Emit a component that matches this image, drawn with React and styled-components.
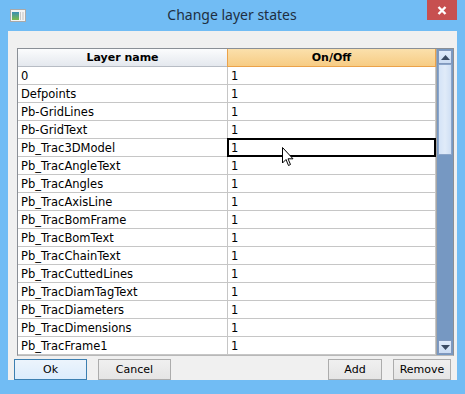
import React from 'react';
import styled, { createGlobalStyle } from 'styled-components';

const GlobalStyle = createGlobalStyle`
	html, body {
		margin: 0;
		padding: 0;
		background: #71bcf4;
	}
`;

const layers = [
	'0',
	'Defpoints',
	'Pb-GridLines',
	'Pb-GridText',
	'Pb_Trac3DModel',
	'Pb_TracAngleText',
	'Pb_TracAngles',
	'Pb_TracAxisLine',
	'Pb_TracBomFrame',
	'Pb_TracBomText',
	'Pb_TracChainText',
	'Pb_TracCuttedLines',
	'Pb_TracDiamTagText',
	'Pb_TracDiameters',
	'Pb_TracDimensions',
	'Pb_TracFrame1',
];

const SELECTED = 4;

const Window = styled.div`
	position: relative;
	width: 465px;
	height: 394px;
	background: #71bcf4;
	display: flex;
	flex-direction: column;
	box-sizing: border-box;
	overflow: hidden;
	font-family: 'DejaVu Sans', Verdana, sans-serif;
`;

const TitleBar = styled.div`
	height: 31px;
	display: flex;
	align-items: flex-start;
	padding: 0 8px 0 10px;
	flex-shrink: 0;
`;

const AppIcon = styled.div`
	margin-top: 9px;
	width: 16px;
	height: 13px;
	display: flex;
`;

const Title = styled.div`
	flex: 1;
	text-align: center;
	margin-top: 5px;
	font-family: 'Noto Sans', 'Open Sans', sans-serif;
	font-size: 14px;
	color: #1e2f42;
	padding-left: 11px;
`;

const CloseButton = styled.div`
	width: 30px;
	height: 20px;
	background: #c75050;
	display: flex;
	align-items: center;
	justify-content: center;
`;

const Client = styled.div`
	margin: 0 8px;
	height: 349px;
	background: #f0f0f0;
	display: flex;
	flex-direction: column;
	padding: 17px 3px 0 9px;
	box-sizing: border-box;
`;

const Table = styled.div`
	height: 308px;
	border: 1px solid #8a8f96;
	border-bottom-color: #b8b8b8;
	background: #fff;
	display: grid;
	grid-template-columns: 1fr 17px;
	overflow: hidden;
	box-sizing: border-box;
`;

const Grid = styled.div`
	display: grid;
	grid-template-columns: 210px 1fr;
	grid-auto-rows: 18px;
	overflow: hidden;
`;

const HeaderCell = styled.div`
	box-sizing: border-box;
	display: flex;
	align-items: center;
	justify-content: center;
	font-weight: bold;
	font-size: 11px;
	color: #000;
	background: ${({ $active }) =>
		$active
			? 'linear-gradient(#fbe0ac, #f7cc84)'
			: 'linear-gradient(#fbfcfd, #e4e8ee)'};
	border-right: 1px solid ${({ $active }) => ($active ? '#eba24a' : '#c2c6cc')};
	border-bottom: 1px solid ${({ $active }) => ($active ? '#eba24a' : '#b7bcc4')};
	${({ $active }) => $active && 'border-left: 1px solid #eba24a; margin-left: -1px;'}
`;

const Cell = styled.div`
	box-sizing: border-box;
	display: flex;
	align-items: center;
	padding-left: 3px;
	font-size: 11.5px;
	color: #000;
	white-space: nowrap;
	border-bottom: 1px solid #c6c6c6;
	border-right: 1px solid #c6c6c6;
	${({ $selected }) =>
		$selected &&
		`
		border: 2px solid #000;
		margin: -1px 0 0 -1px;
		height: 19px;
		padding-left: 2px;
	`}
`;

const ScrollBar = styled.div`
	display: flex;
	flex-direction: column;
	background: #7698c2;
	border-left: 1px solid #a7a7a7;
	padding: 1px 0 1px 0;
	box-sizing: border-box;
`;

const ArrowButton = styled.div`
	height: 14px;
	margin: 0 1px;
	background: linear-gradient(#dfeafa, #cbdcf3);
	border: 1px solid #8198bd;
	box-sizing: border-box;
	display: flex;
	align-items: center;
	justify-content: center;
`;

const Thumb = styled.div`
	height: 91px;
	margin: 0 1px;
	background: linear-gradient(90deg, #d4e3f7, #e0ebf9 50%, #cfdff4);
	border: 1px solid #8ba5c9;
	box-sizing: border-box;
`;

const Track = styled.div`
	flex: 1;
`;

const ButtonRow = styled.div`
	display: flex;
	align-items: center;
	margin: 3px 3px 0 -3px;
	gap: 11px;
`;

const Spacer = styled.div`
	flex: 1;
`;

const Button = styled.button`
	height: 21px;
	width: ${({ $w }) => $w}px;
	margin: 0;
	padding: 0;
	font-family: 'DejaVu Sans', Verdana, sans-serif;
	font-size: 11px;
	color: #000;
	background: ${({ $default }) =>
		$default ? 'linear-gradient(#ecf4fc, #dcecfc)' : 'linear-gradient(#f0f0f0, #e5e5e5)'};
	border: 1px solid ${({ $default }) => ($default ? '#3c7fb1' : '#acacac')};
	box-sizing: border-box;
`;

const Cursor = styled.svg`
	position: absolute;
	left: 282px;
	top: 147px;
`;

const WindowIcon = () => (
	<svg width="16" height="13" viewBox="0 0 16 13">
		<rect x="0.5" y="0.5" width="15" height="12" fill="#f4f4f4" stroke="#a9a9a9" />
		<defs>
			<linearGradient id="ig" x1="0" y1="0" x2="0" y2="1">
				<stop offset="0" stopColor="#3b8fb5" />
				<stop offset="1" stopColor="#7dbb4a" />
			</linearGradient>
		</defs>
		<rect x="2" y="3" width="7" height="8" fill="url(#ig)" />
		<rect x="10" y="3" width="1" height="8" fill="#c8c8c8" />
		<rect x="12" y="3" width="2" height="8" fill="#dadada" />
	</svg>
);

const App = () => {
	return (
		<>
			<GlobalStyle />
			<Window>
				<TitleBar>
					<AppIcon>
						<WindowIcon />
					</AppIcon>
					<Title>Change layer states</Title>
					<CloseButton>
						<svg width="10" height="9" viewBox="0 0 10 9">
							<path d="M1.5 1 L8.5 8 M8.5 1 L1.5 8" stroke="#fff" strokeWidth="2.4" />
						</svg>
					</CloseButton>
				</TitleBar>
				<Client>
					<Table>
						<Grid>
							<HeaderCell>Layer name</HeaderCell>
							<HeaderCell $active>On/Off</HeaderCell>
							{layers.map((name, i) => (
								<React.Fragment key={name}>
									<Cell>{name}</Cell>
									<Cell $selected={i === SELECTED}>1</Cell>
								</React.Fragment>
							))}
						</Grid>
						<ScrollBar>
							<ArrowButton>
								<svg width="9" height="5" viewBox="0 0 9 5">
									<path d="M0 5 L4.5 0 L9 5 Z" fill="#3a4a63" />
								</svg>
							</ArrowButton>
							<Thumb />
							<Track />
							<ArrowButton>
								<svg width="9" height="5" viewBox="0 0 9 5">
									<path d="M0 0 L4.5 5 L9 0 Z" fill="#3a4a63" />
								</svg>
							</ArrowButton>
						</ScrollBar>
					</Table>
					<ButtonRow>
						<Button $default $w={73}>Ok</Button>
						<Button $w={73}>Cancel</Button>
						<Spacer />
						<Button $w={54}>Add</Button>
						<Button $w={58}>Remove</Button>
					</ButtonRow>
				</Client>
				<Cursor width="12" height="20" viewBox="0 0 12 20">
					<path
						d="M0.5 0.5 L0.5 16 L4 12.5 L6.5 18.5 L8.5 17.5 L6 11.8 L11 11.8 Z"
						fill="#fff"
						stroke="#000"
						strokeWidth="1"
						strokeLinejoin="miter"
					/>
				</Cursor>
			</Window>
		</>
	);
};

export default App;
